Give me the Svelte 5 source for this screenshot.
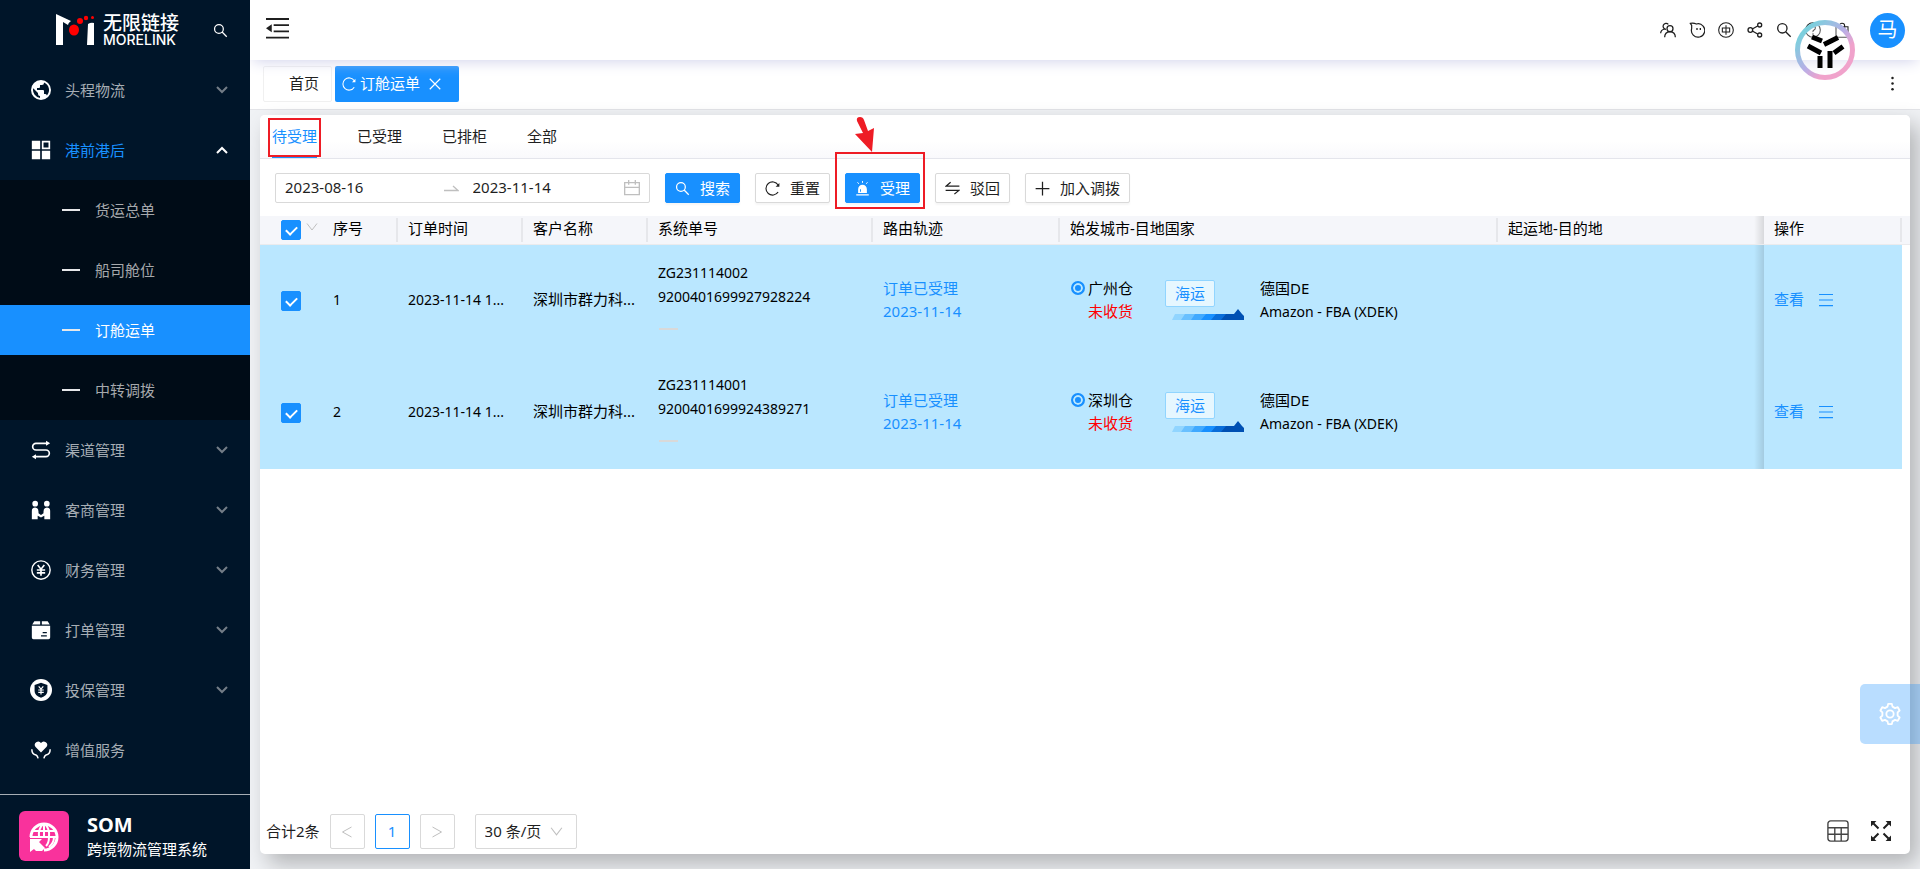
<script lang="ts">
  type MenuItem = {
    label: string;
    icon: string;
    open?: boolean;
    leaf?: boolean;
    children?: string[];
  };

  const menu: MenuItem[] = $state([
    { label: '头程物流', icon: 'globe' },
    { label: '港前港后', icon: 'blocks', open: true, children: ['货运总单', '船司舱位', '订舱运单', '中转调拨'] },
    { label: '渠道管理', icon: 'route' },
    { label: '客商管理', icon: 'people' },
    { label: '财务管理', icon: 'yen' },
    { label: '打单管理', icon: 'box' },
    { label: '投保管理', icon: 'shield' },
    { label: '增值服务', icon: 'heart', leaf: true }
  ]);

  const statusTabs = ['待受理', '已受理', '已排柜', '全部'];

  let activeMenu = $state('订舱运单');
  let activeTab = $state('待受理');
  let startDate = $state('2023-08-16');
  let endDate = $state('2023-11-14');
  let pageSize = $state('30');

  let rows = $state([
    { checked: true, time: '2023-11-14 1...', customer: '深圳市群力科...', no: 'ZG231114002', sysNo: '9200401699927928224', depot: '广州仓' },
    { checked: true, time: '2023-11-14 1...', customer: '深圳市群力科...', no: 'ZG231114001', sysNo: '9200401699924389271', depot: '深圳仓' }
  ]);

  let allChecked = $derived(rows.every((r) => r.checked));

  function toggleAll() {
    const next = !allChecked;
    rows.forEach((r) => (r.checked = next));
  }

  // 24x24 图标
  const icons: Record<string, string> = {
    globe:
      '<path fill="currentColor" d="M12 0a12 12 0 1 0 0 24a12 12 0 0 0 0-24zm-1.200 21.500A9.600 9.600 0 0 1 2.650 9.900l5.750 5.700v1.200a2.400 2.400 0 0 0 2.400 2.400zm8.300-3a2.400 2.400 0 0 0-2.300-1.700h-1.200v-3.600a1.200 1.200 0 0 0-1.200-1.200H7.200V9.600h2.400a1.200 1.200 0 0 0 1.200-1.200V6h2.400a2.400 2.400 0 0 0 2.400-2.400v-.5a9.600 9.600 0 0 1 3.500 15.400z"/>',
    blocks:
      '<path fill="currentColor" d="M1 1h10v10H1zM1 13h10v10H1zM13 13h10v10H13z"/><path fill="none" stroke="currentColor" stroke-width="2" d="M14 2h8v8h-8z"/>',
    route:
      '<path fill="none" stroke="currentColor" stroke-width="2" d="M20 4H6a4 4 0 0 0 0 8h12a4 4 0 0 1 0 8H4"/><path fill="currentColor" d="M18 1l5 3-5 3zM6 17l-5 3 5 3z"/>',
    people:
      '<path fill="currentColor" d="M5 1a3.400 3.400 0 1 1 0 6.800A3.400 3.400 0 0 1 5 1zM19 1a3.400 3.400 0 1 1 0 6.800A3.400 3.400 0 0 1 19 1zM1 23V13q0-4 4-4t4 5v2l3 2 3-2v-2q0-5 4-5t4 4v10h-7v-4l-4 2-4-2v4z"/>',
    yen:
      '<g fill="none" stroke="currentColor"><circle cx="12" cy="12" r="11" stroke-width="1.700"/><path stroke-width="2" d="M8 6l4 5 4-5M12 11v8M7 12h10M7 15.500h10"/></g>',
    box:
      '<path fill="currentColor" d="M4 1.500h7v4H1.500zM13 1.500h7l2.500 4H13zM1 7h22v14a2 2 0 0 1-2 2H3a2 2 0 0 1-2-2z"/><path stroke="#001529" stroke-width="1.500" d="M14 15h5M12 19h7"/>',
    shield:
      '<circle cx="12" cy="12" r="12" fill="currentColor"/><path fill="#001529" d="M12 4l7 2.500V13q0 5-7 7.500Q5 18 5 13V6.500z"/><path fill="none" stroke="#fff" stroke-width="1.300" d="M9.500 8l2.500 3 2.500-3M12 11v6M9 12h6M9 14.500h6"/>',
    heart:
      '<path fill="currentColor" d="M12 15L5.500 8.500A4 4 0 0 1 12 3.500a4 4 0 0 1 6.500 5z"/><path fill="none" stroke="currentColor" stroke-width="1.800" d="M1 11q0 6 5 7 2 1 2.500 4M23 11q0 6-5 7-2 1-2.500 4"/>',
    search:
      '<g fill="none" stroke="currentColor" stroke-width="2"><circle cx="9.500" cy="9.500" r="7"/><path d="M14.500 14.500L22 22"/></g>',
    reload:
      '<path fill="none" stroke="currentColor" stroke-width="1.800" d="M21 17.500A10.500 10.500 0 1 1 21 6.500"/><path fill="currentColor" d="M23 3v6h-6z"/>',
    close: '<path stroke="currentColor" stroke-width="2" d="M3 3l18 18M21 3L3 21"/>',
    down: '<path fill="none" stroke="currentColor" stroke-width="2" d="M2 5l10 13L22 5"/>',
    left: '<path fill="none" stroke="currentColor" stroke-width="2" d="M21 2L3 12l18 10"/>',
    right: '<path fill="none" stroke="currentColor" stroke-width="2" d="M3 2l18 10L3 22"/>',
    plus: '<path stroke="currentColor" stroke-width="2" d="M12 1v22M1 12h22"/>',
    swap: '<path fill="none" stroke="currentColor" stroke-width="2" d="M23 8H2l7-6M1 15h21l-7 6"/>',
    alarm:
      '<path fill="currentColor" fill-rule="evenodd" d="M5 19v-6a7 7 0 0 1 14 0v6zM8 17h1.500v-4H8zM2 21h20v2H2z"/><path stroke="currentColor" stroke-width="1.500" d="M12 0v3M4 2l2 2.500M20 2l-2 2.500"/>',
    calendar:
      '<path fill="none" stroke="currentColor" stroke-width="2" d="M1 4h22v18H1zM1 11h22M7 0v7M17 0v7"/>',
    team:
      '<g fill="none" stroke="currentColor" stroke-width="1.900"><circle cx="15" cy="10" r="4.500"/><path d="M7 23q0-8 8-8.500 8 .5 8 8.500M9 11a4.500 4.500 0 1 1 3.500-7.500M1 17q0-5 6-6.500"/></g>',
    chat:
      '<g fill="none" stroke="currentColor" stroke-width="1.800"><path d="M4 5L2 2q5-1 9 1 6-2 10 3a10 10 0 1 1-17 4z"/></g><path fill="currentColor" d="M11 9h2v3h-2zM16 9h2v3h-2z"/>',
    lang:
      '<g fill="none" stroke="currentColor" stroke-width="1.600"><circle cx="12" cy="12" r="11"/><path d="M6.500 9h11v6h-11zM12 5v14"/></g>',
    share:
      '<g fill="none" stroke="currentColor" stroke-width="2"><circle cx="5" cy="12" r="3.500"/><circle cx="19" cy="4.500" r="3"/><circle cx="19" cy="19.500" r="3"/><path d="M8 10.500l8-4.500M8 13.500l8 4.500"/></g>',
    help:
      '<g fill="none" stroke="currentColor" stroke-width="1.600"><circle cx="12" cy="12" r="11"/><path d="M8.500 9.500q0-4 3.500-4t3.500 3.500q0 2-2 3t-1.500 3M12 17v2"/></g>',
    bag: '<path fill="none" stroke="currentColor" stroke-width="1.600" d="M3 7h18v16H3zM8 10V6a4 4 0 0 1 8 0v4"/>',
    gear:
      '<g fill="none" stroke="currentColor" stroke-width="2" stroke-linejoin="round"><circle cx="12" cy="12" r="4"/><path d="M10 1h4l.7 3 2.800 1.600 3-1 2 3.600-2.200 2.100v3.400l2.200 2.100-2 3.600-3-1-2.800 1.600-.7 3h-4l-.7-3-2.800-1.600-3 1-2-3.600 2.200-2.100v-3.400L1.500 8.200l2-3.600 3 1L9.300 4z"/></g>',
    sheet:
      '<path fill="none" stroke="#444" stroke-width="1.500" d="M4 1h16a3 3 0 0 1 3 3v16a3 3 0 0 1-3 3H4a3 3 0 0 1-3-3V4a3 3 0 0 1 3-3zM1 8.500h22M1 15.500h22M8.500 8.500V23M15.500 8.500V23"/>',
    expand:
      '<path stroke="currentColor" stroke-width="2.400" d="M3 3l6 6M21 3l-6 6M3 21l6-6M21 21l-6-6"/><path fill="currentColor" d="M0 0h6.500L0 6.500zM24 0v6.500L17.500 0zM0 24v-6.500L6.500 24zM24 24h-6.500l6.500-6.500z"/>',
    fold:
      '<path stroke="currentColor" stroke-width="2" d="M0 2h24M8 8.500h16M8 15h16M0 21.500h24"/><path fill="currentColor" d="M6 7.500v8.500l-6-4.300z"/>',
    lines: '<path stroke="currentColor" stroke-width="2" d="M0 2.500h24M0 12h24M0 21.500h24"/>',
    dots: '<g fill="currentColor"><circle cx="12" cy="3" r="2"/><circle cx="12" cy="12" r="2"/><circle cx="12" cy="21" r="2"/></g>'
  };
</script>

{#snippet icon(name: string, size: number)}
  <svg class="icon" width={size} height={size} viewBox="0 0 24 24" aria-hidden="true">{@html icons[name]}</svg>
{/snippet}

<div class="layout">
  <aside class="sidebar">
    <div class="brand">
      <svg width="40" height="32" viewBox="0 0 40 32" aria-hidden="true">
        <path fill="#fff" d="M1 0l15 7q-3 2-3 4l-5-3v23H1zM33 10q3-2 6-1v22h-7z" />
        <g fill="#f00">
          <ellipse cx="19" cy="16" rx="5" ry="5.500" />
          <circle cx="25" cy="7" r="3" />
          <circle cx="31" cy="4" r="2.200" />
          <circle cx="37.500" cy="3.500" r="1.500" />
        </g>
      </svg>
      <div class="brand-text">
        <span class="brand-cn">无限链接</span>
        <span class="brand-en">MORELINK</span>
      </div>
      <button class="plain brand-search" aria-label="搜索菜单">{@render icon('search', 15)}</button>
    </div>

    <nav class="menu">
      {#each menu as item}
        <button class="plain menu-item" class:open={item.open} onclick={() => (item.open = !item.open)}>
          <span class="menu-icon">{@render icon(item.icon, item.icon === 'shield' ? 22 : 20)}</span>
          <span class="menu-label">{item.label}</span>
          {#if !item.leaf}
            <svg class="chevron" width="12" height="8" viewBox="0 0 12 8" aria-hidden="true">
              <path d="M1 1l5 5 5-5" fill="none" stroke="currentColor" stroke-width="2" />
            </svg>
          {/if}
        </button>
        {#if item.open && item.children}
          <div class="submenu">
            {#each item.children as child}
              <a href="#{child}" class="sub-item" class:active={activeMenu === child} onclick={() => (activeMenu = child)}>
                <span class="dash"></span>{child}
              </a>
            {/each}
          </div>
        {/if}
      {/each}
    </nav>

    <div class="system">
      <div class="system-logo">
        <svg width="32" height="32" viewBox="0 0 32 32" fill="none" stroke="#fff" stroke-width="2" aria-hidden="true">
          <path d="M3 17a13 13 0 1 1 13 13" stroke-width="3" />
          <path d="M16 4v13M4 11h24M2 17h28M11 17q-1-8 4-13M21 17q1-8-4-13M21 17q0 6-3 9M26 17q0 6-5 10" />
          <path fill="#fff" stroke="none" d="M2 19h12l-3 3 6 6-3 3H8l-2-2-4 3z" />
        </svg>
      </div>
      <div>
        <div class="system-name">SOM</div>
        <div class="system-desc">跨境物流管理系统</div>
      </div>
    </div>
  </aside>

  <div class="main">
    <header class="topbar">
      <button class="plain" aria-label="收起菜单">{@render icon('fold', 23)}</button>
      <div class="tools">
        {#each ['team', 'chat', 'lang', 'share', 'search', 'help', 'bag'] as name}
          <button class="plain" aria-label={name}>{@render icon(name, 16)}</button>
        {/each}
        <div class="avatar">马</div>
      </div>
      <svg class="float-logo" width="60" height="60" viewBox="0 0 60 60" aria-hidden="true">
        <defs>
          <linearGradient id="ring" x1="0" y1="0" x2="1" y2="1">
            <stop offset="0.150" stop-color="#7ccfdd" />
            <stop offset="0.500" stop-color="#b9aee6" />
            <stop offset="0.700" stop-color="#f0a2cb" />
          </linearGradient>
        </defs>
        <circle cx="30" cy="30" r="27.500" fill="#fff" fill-opacity="0.250" stroke="url(#ring)" stroke-width="5" />
        <g stroke="#000" stroke-width="5">
          <path d="M17 17l10 4M29 24.500l14-7M13 26l13 7M39 33l9-6.500M25 36v12M35 31v17" />
        </g>
      </svg>
    </header>

    <div class="page-tabs">
      <a class="page-tab home" href="#home">首页</a>
      <div class="page-tab current">
        {@render icon('reload', 14)}
        <span>订舱运单</span>
        <button class="plain" aria-label="关闭">{@render icon('close', 14)}</button>
      </div>
      <button class="plain more" aria-label="更多">{@render icon('dots', 15)}</button>
    </div>

    <main class="card">
      <div class="status-tabs" role="tablist">
        {#each statusTabs as tab}
          <button
            class="plain status-tab"
            class:active={activeTab === tab}
            role="tab"
            aria-selected={activeTab === tab}
            onclick={() => (activeTab = tab)}
          >
            {tab}
            {#if tab === '待受理'}<span class="mark mark-tab"></span>{/if}
          </button>
        {/each}
      </div>

      <div class="filters">
        <div class="range">
          <input aria-label="开始日期" bind:value={startDate} />
          <svg class="range-arrow" width="15" height="8" viewBox="0 0 15 8" aria-hidden="true">
            <path d="M0 6.500h14L9 2" fill="none" stroke="#bfbfbf" stroke-width="1.300" />
          </svg>
          <input aria-label="结束日期" bind:value={endDate} />
          <span class="calendar">{@render icon('calendar', 16)}</span>
        </div>
        <button class="btn primary">{@render icon('search', 15)}搜索</button>
        <button class="btn">{@render icon('reload', 15)}重置</button>
        <button class="btn primary">
          {@render icon('alarm', 15)}受理
          <span class="mark mark-btn"></span>
          <svg class="arrow" width="20" height="35" viewBox="0 0 20 35" aria-hidden="true">
            <path fill="#ee1c25" d="M3 4q-1-4 3-4 3 0 4 3l4 11 6-3-2 24L1 17l8-1z" />
          </svg>
        </button>
        <button class="btn">{@render icon('swap', 15)}驳回</button>
        <button class="btn">{@render icon('plus', 15)}加入调拨</button>
      </div>

      <div class="table-wrap">
        <table>
          <colgroup>
            <col class="w-check" />
            <col class="w-index" />
            <col class="w-short" />
            <col class="w-short" />
            <col class="w-no" />
            <col class="w-track" />
            <col class="w-city" />
            <col />
            <col class="w-action" />
            <col class="w-gutter" />
          </colgroup>
          <thead>
            <tr>
              <th class="check no-line">
                <input type="checkbox" aria-label="全选" checked={allChecked} onchange={toggleAll} />
                <span class="check-more">{@render icon('down', 12)}</span>
              </th>
              <th>序号</th>
              <th>订单时间</th>
              <th>客户名称</th>
              <th>系统单号</th>
              <th>路由轨迹</th>
              <th>始发城市-目地国家</th>
              <th class="no-line">起运地-目的地</th>
              <th class="fixed">操作</th>
              <td class="gutter"></td>
            </tr>
          </thead>
          <tbody>
            {#each rows as row, i}
              <tr class:selected={row.checked}>
                <td class="check"><input type="checkbox" aria-label="选择第{i + 1}行" bind:checked={row.checked} /></td>
                <td class="latin">{i + 1}</td>
                <td class="latin">{row.time}</td>
                <td>{row.customer}</td>
                <td class="latin numbers">
                  <div>{row.no}</div>
                  <div>{row.sysNo}</div>
                  <span class="empty"></span>
                </td>
                <td class="track">
                  <div>订单已受理</div>
                  <div>2023-11-14</div>
                </td>
                <td>
                  <div class="route">
                    <div class="from">
                      <span class="dot"></span>
                      <div>
                        <div>{row.depot}</div>
                        <div class="pending">未收货</div>
                      </div>
                    </div>
                    <div class="ship">
                      <span class="tag">海运</span>
                      <svg width="72" height="11" viewBox="0 0 72 11" aria-hidden="true">
                        <path fill="#91d5ff" d="M3 5h14l-5 6H0z" />
                        <path fill="#69c0ff" d="M13 5h13l-5 6H9z" />
                        <path fill="#40a9ff" d="M23 5h13l-5 6H19z" />
                        <path fill="#1890ff" d="M34 5h13l-5 6H29z" />
                        <path fill="#096dd9" d="M44 5h13l-5 6H39z" />
                        <path fill="#0050b3" d="M54 5h8l4-5 4 5 2 2v4H49z" />
                      </svg>
                    </div>
                    <div class="to">
                      <div>德国DE</div>
                      <div class="latin">Amazon - FBA (XDEK)</div>
                    </div>
                  </div>
                </td>
                <td></td>
                <td class="fixed">
                  <div class="actions">
                    <a href="#view">查看</a>
                    <button class="plain" aria-label="更多操作">{@render icon('lines', 14)}</button>
                  </div>
                </td>
                <td class="gutter"></td>
              </tr>
            {/each}
          </tbody>
        </table>
      </div>

      <footer class="pager">
        <span class="total">合计2条</span>
        <button class="page-btn" aria-label="上一页">{@render icon('left', 12)}</button>
        <button class="page-btn on">1</button>
        <button class="page-btn" aria-label="下一页">{@render icon('right', 12)}</button>
        <div class="size">
          <select aria-label="每页条数" bind:value={pageSize}>
            <option value="30">30 条/页</option>
            <option value="50">50 条/页</option>
          </select>
          <span class="size-arrow">{@render icon('down', 13)}</span>
        </div>
        <div class="pager-tools">
          <button class="plain" aria-label="列设置">{@render icon('sheet', 22)}</button>
          <button class="plain" aria-label="全屏">{@render icon('expand', 20)}</button>
        </div>
      </footer>
    </main>
  </div>

  <button class="plain setting" aria-label="设置">{@render icon('gear', 22)}</button>
</div>

<style>
  :global(body) {
    margin: 0;
    color: #1f1f1f;
    font-family: 'Noto Sans', 'Noto Sans CJK SC', sans-serif;
    font-size: 15px;
    line-height: 23px;
  }

  * {
    box-sizing: border-box;
  }

  button,
  input,
  select {
    font: inherit;
    color: inherit;
  }

  a {
    color: inherit;
    text-decoration: none;
  }

  .icon {
    display: block;
    flex: none;
  }

  .plain {
    padding: 0;
    border: 0;
    background: none;
    cursor: pointer;
  }

  .layout {
    display: flex;
    min-height: 100vh;
    background: #f0f2f5;
  }

  /* 侧边栏 */
  .sidebar {
    position: relative;
    z-index: 3;
    display: flex;
    flex: none;
    flex-direction: column;
    width: 250px;
    color: #fff;
    background: #001529;
  }

  .brand {
    display: flex;
    align-items: center;
    height: 60px;
    padding: 0 22px 0 55px;
  }

  .brand-text {
    display: flex;
    flex-direction: column;
    margin-left: 8px;
  }

  .brand-cn {
    font-size: 19px;
    font-weight: 500;
    line-height: 20px;
  }

  .brand-en {
    font-family: Inter, sans-serif;
    font-size: 14px;
    font-weight: 500;
    line-height: 14px;
  }

  .brand-search {
    margin-left: auto;
  }

  .menu {
    flex: 1;
  }

  .menu-item {
    display: flex;
    align-items: center;
    width: 100%;
    height: 60px;
    padding: 0 22px 0 30px;
    text-align: left;
  }

  .menu-icon {
    display: flex;
    justify-content: center;
    width: 22px;
    margin-right: 13px;
  }

  .menu-label {
    flex: 1;
    color: #a6adb4;
  }

  .chevron {
    color: #737d87;
  }

  .open .menu-label {
    color: #1890ff;
  }

  .open .chevron {
    color: #fff;
    transform: rotate(180deg);
  }

  .submenu {
    display: flex;
    flex-direction: column;
    gap: 10px;
    padding: 5px 0;
    background: #000c17;
  }

  .sub-item {
    display: flex;
    align-items: center;
    height: 50px;
    padding-left: 62px;
    color: #a6a9ac;
  }

  .sub-item.active {
    color: #fff;
    background: #1890ff;
  }

  .dash {
    width: 18px;
    height: 2px;
    margin-right: 15px;
    background: #e6e8ea;
  }

  .system {
    display: flex;
    align-items: center;
    gap: 18px;
    height: 75px;
    padding: 8px 19px 0;
    border-top: 1px solid #a6adb4;
  }

  .system-logo {
    display: flex;
    align-items: center;
    justify-content: center;
    width: 50px;
    height: 50px;
    border-radius: 6px;
    background: #f9329c;
  }

  .system-name {
    font-size: 20px;
    font-weight: 700;
    line-height: 27px;
  }

  /* 顶栏 */
  .main {
    display: flex;
    flex: 1;
    flex-direction: column;
    min-width: 0;
  }

  .topbar {
    position: relative;
    z-index: 2;
    display: flex;
    align-items: center;
    justify-content: space-between;
    height: 60px;
    padding: 0 15px 4px 16px;
    background: #fff;
    box-shadow: 0 4px 14px -3px #cfd0ea;
  }

  .tools {
    display: flex;
    align-items: center;
    gap: 13px;
    padding-top: 4px;
  }

  .avatar {
    width: 35px;
    height: 35px;
    margin-left: 7px;
    border-radius: 50%;
    color: #fff;
    font-size: 20px;
    line-height: 34px;
    text-align: center;
    background: #1890ff;
  }

  .float-logo {
    position: absolute;
    top: 20px;
    right: 65px;
  }

  .page-tabs {
    display: flex;
    align-items: center;
    gap: 3px;
    height: 50px;
    padding: 0 20px 2px 13px;
    border-bottom: 1px solid #e3e4e8;
    background: #fff;
  }

  .page-tab {
    display: flex;
    align-items: center;
    height: 36px;
    border-radius: 2px;
  }

  .home {
    padding: 0 12px 0 25px;
    border: 1px solid #f0f0f0;
  }

  .current {
    gap: 4px;
    padding: 0 17px 0 7px;
    color: #fff;
    background: #1890ff;
  }

  .current button {
    margin-left: 4px;
  }

  .more {
    margin-left: auto;
  }

  /* 内容卡片 */
  .card {
    display: flex;
    flex: 1;
    flex-direction: column;
    margin: 5px 10px 15px;
    border-radius: 5px;
    background: #fff;
    box-shadow: 8px 10px 22px rgba(0, 0, 0, 0.26);
  }

  .status-tabs {
    display: flex;
    gap: 40px;
    padding: 0 12px;
    border-bottom: 1px solid #e4e5ec;
    border-radius: 5px 5px 0 0;
    background: linear-gradient(#fff 60%, #f9f9fc);
  }

  .status-tab {
    position: relative;
    height: 43px;
    padding-top: 2px;
    border-bottom: 2px solid transparent;
  }

  .status-tab.active {
    color: #1890ff;
    border-color: #1890ff;
  }

  .mark {
    position: absolute;
    border: 2px solid #ee1c25;
    pointer-events: none;
  }

  .mark-tab {
    inset: 3px -4px -1px;
  }

  .mark-btn {
    inset: -22px -6px -7px -11px;
  }

  .arrow {
    position: absolute;
    top: -57px;
    left: 8px;
  }

  .filters {
    display: flex;
    gap: 15px;
    padding: 14px 15px 13px;
  }

  .range {
    display: flex;
    align-items: center;
    width: 375px;
    height: 30px;
    padding: 0 9px;
    border: 1px solid #d9d9d9;
    border-radius: 2px;
  }

  .range input {
    flex: 1;
    min-width: 0;
    padding: 0 0 2px;
    border: 0;
    outline: 0;
    background: none;
  }

  .range-arrow {
    margin: 0 14px 0 7px;
  }

  .calendar {
    color: #bfbfbf;
  }

  .btn {
    position: relative;
    display: flex;
    align-items: center;
    gap: 10px;
    height: 30px;
    padding: 0 9px;
    border: 1px solid #d9d9d9;
    border-radius: 2px;
    background: #fff;
    box-shadow: 0 2px 2px rgba(0, 0, 0, 0.04);
    cursor: pointer;
  }

  .primary {
    border-color: #1890ff;
    color: #fff;
    background: #1890ff;
  }

  /* 表格 */
  .table-wrap {
    flex: 1;
  }

  table {
    width: 100%;
    border-spacing: 0;
    color: #000;
    table-layout: fixed;
  }

  .w-check {
    width: 63px;
  }

  .w-index {
    width: 75px;
  }

  .w-short {
    width: 125px;
  }

  .w-no {
    width: 225px;
  }

  .w-track {
    width: 187px;
  }

  .w-city {
    width: 438px;
  }

  .w-action {
    width: 138px;
  }

  .w-gutter {
    width: 8px;
  }

  th,
  td {
    position: relative;
    padding: 0 0 3px 10px;
    text-align: left;
    white-space: nowrap;
  }

  th,
  thead td {
    height: 29px;
    border-bottom: 1px solid #ebebed;
    font-weight: 400;
    background: #f5f6fa;
  }

  th::after {
    position: absolute;
    top: 2px;
    right: 0;
    width: 2px;
    height: 24px;
    background: #e6e7eb;
    content: '';
  }

  .no-line::after {
    content: none;
  }

  th.check,
  td.check {
    padding: 0 0 0 21px;
  }

  tbody td {
    height: 112px;
  }

  .selected td {
    background: #bae7ff;
  }

  td.gutter {
    padding: 0;
  }

  tbody td.gutter {
    background: #fff;
  }

  input[type='checkbox'] {
    position: relative;
    display: block;
    width: 20px;
    height: 20px;
    margin: 0;
    border: 1px solid #1890ff;
    border-radius: 2px;
    appearance: none;
    background: #fff;
    cursor: pointer;
  }

  input[type='checkbox']:checked {
    background: #1890ff;
  }

  input[type='checkbox']:checked::after {
    position: absolute;
    top: 3px;
    left: 6px;
    width: 5px;
    height: 9px;
    border: solid #fff;
    border-width: 0 2px 2px 0;
    transform: rotate(45deg);
    content: '';
  }

  .check-more {
    position: absolute;
    top: 5px;
    left: 46px;
    color: #bfbfbf;
  }

  .latin {
    font-size: 14px;
  }

  td.numbers {
    padding-bottom: 12px;
    line-height: 24px;
  }

  .empty {
    display: block;
    width: 19px;
    height: 2px;
    margin: 19px 0 0 1px;
    background: #d9d9d9;
  }

  .track {
    color: #1890ff;
  }

  .route {
    display: flex;
  }

  .from {
    display: flex;
    gap: 3px;
    width: 94px;
    margin-left: 1px;
  }

  .dot {
    width: 14px;
    height: 14px;
    margin-top: 4px;
    border: 2px solid #1890ff;
    border-radius: 50%;
    background: #1890ff;
    box-shadow: inset 0 0 0 2px #bae7ff;
  }

  .pending {
    color: #f00;
  }

  .ship {
    display: flex;
    flex-direction: column;
    gap: 2px;
    width: 95px;
    padding-top: 3px;
  }

  .ship svg {
    margin-left: 7px;
  }

  .tag {
    align-self: flex-start;
    padding: 1px 9px;
    border: 1px solid #91d5ff;
    border-radius: 2px;
    color: #1890ff;
    background: #e6f7ff;
  }

  .fixed::before {
    position: absolute;
    top: 0;
    right: 100%;
    bottom: 0;
    width: 10px;
    background: linear-gradient(to right, transparent, rgba(0, 0, 0, 0.12));
    content: '';
  }

  .actions {
    display: flex;
    align-items: center;
    gap: 15px;
    color: #1890ff;
  }

  /* 分页 */
  .pager {
    display: flex;
    align-items: center;
    gap: 10px;
    padding: 0 19px 5px 6px;
  }

  .page-btn {
    display: flex;
    align-items: center;
    justify-content: center;
    width: 35px;
    height: 35px;
    padding: 0;
    border: 1px solid #d9d9d9;
    border-radius: 2px;
    color: #bfbfbf;
    background: #fff;
    cursor: pointer;
  }

  .page-btn.on {
    border-color: #1890ff;
    color: #1890ff;
  }

  .size {
    position: relative;
    margin-left: 10px;
  }

  .size select {
    display: block;
    width: 102px;
    height: 35px;
    padding: 0 9px;
    border: 1px solid #d9d9d9;
    border-radius: 2px;
    appearance: none;
    background: #fff;
  }

  .size-arrow {
    position: absolute;
    top: 11px;
    right: 14px;
    color: #bfbfbf;
    pointer-events: none;
  }

  .pager-tools {
    display: flex;
    align-items: center;
    gap: 22px;
    margin-left: auto;
    padding-bottom: 2px;
  }

  .setting {
    position: fixed;
    top: 684px;
    right: 0;
    z-index: 3;
    display: flex;
    align-items: center;
    justify-content: center;
    width: 60px;
    height: 60px;
    border-radius: 5px 0 0 5px;
    color: #fff;
    background: rgba(24, 144, 255, 0.3);
  }
</style>
